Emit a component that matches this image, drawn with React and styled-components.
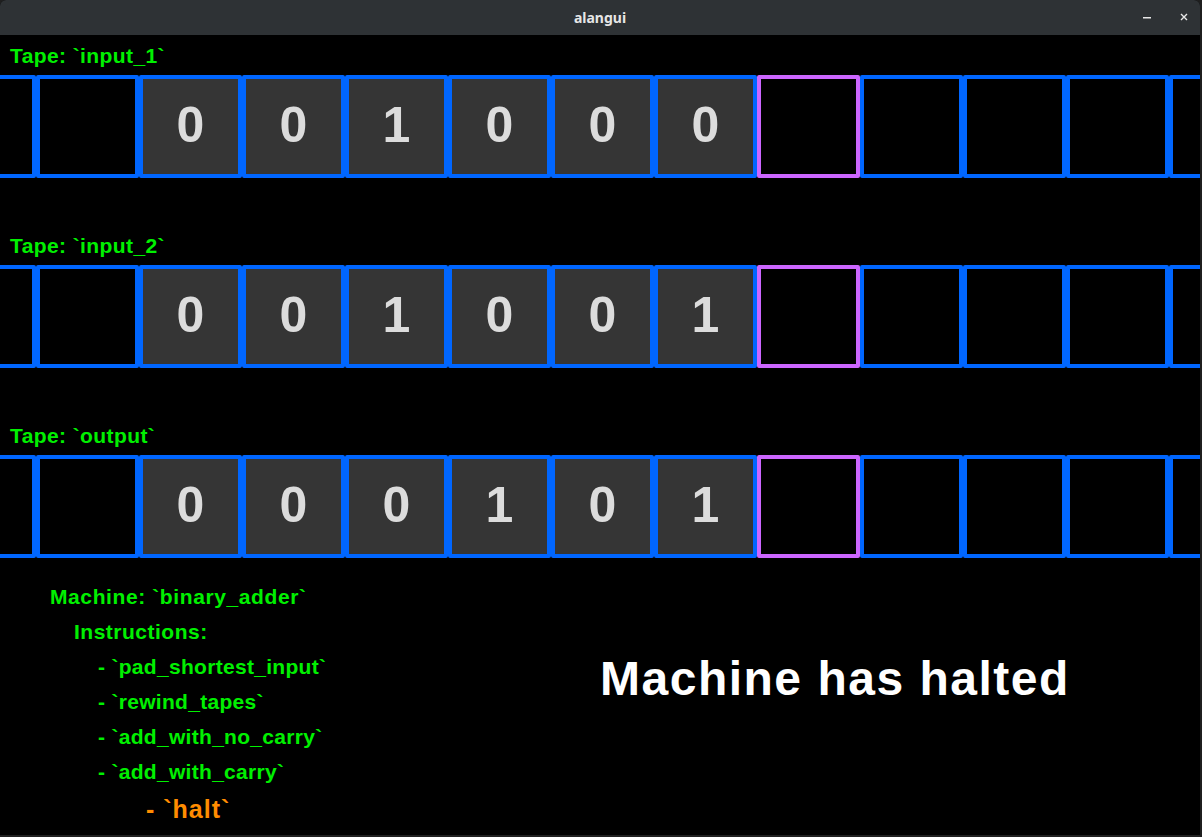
import styled, { createGlobalStyle } from "styled-components";

const GlobalStyle = createGlobalStyle`
  html, body {
    margin: 0;
    padding: 0;
    background: #1f1f1f;
  }
`;

const tapes = [
  { name: "input_1", cells: ["0", "0", "1", "0", "0", "0"] },
  { name: "input_2", cells: ["0", "0", "1", "0", "0", "1"] },
  { name: "output", cells: ["0", "0", "0", "1", "0", "1"] },
];

const instructions = [
  "pad_shortest_input",
  "rewind_tapes",
  "add_with_no_carry",
  "add_with_carry",
];

const HEAD = 8;
const TOTAL = 13;

function buildCells(values) {
  const out = [];
  for (let i = 0; i < TOTAL; i++) {
    const v = i >= 2 && i < 2 + values.length ? values[i - 2] : null;
    out.push({ value: v, head: i === HEAD });
  }
  return out;
}

export default function App() {
  return (
    <>
      <GlobalStyle />
      <Window>
        <TitleBar>
          <Title>alangui</Title>
          <Controls>
            <ControlButton aria-label="minimize">
              <svg width="10" height="10" viewBox="0 0 10 10">
                <rect x="1" y="5" width="8" height="1.5" fill="#e8e8e8" />
              </svg>
            </ControlButton>
            <ControlButton aria-label="close">
              <svg width="10" height="10" viewBox="0 0 10 10">
                <path d="M2 2 L8 8 M8 2 L2 8" stroke="#e8e8e8" strokeWidth="1.4" />
              </svg>
            </ControlButton>
          </Controls>
        </TitleBar>

        <Tapes>
          {tapes.map((tape) => (
            <TapeBlock key={tape.name}>
              <TapeLabel>Tape: `{tape.name}`</TapeLabel>
              <CellRow>
                {buildCells(tape.cells).map((c, i) => (
                  <Cell key={i} $filled={c.value !== null} $head={c.head}>
                    {c.value}
                  </Cell>
                ))}
              </CellRow>
            </TapeBlock>
          ))}
        </Tapes>

        <Bottom>
          <MachineInfo>
            <InfoLine $indent={50} $spacing={0.6}>Machine: `binary_adder`</InfoLine>
            <InfoLine $indent={74} $spacing={0.5}>Instructions:</InfoLine>
            {instructions.map((ins) => (
              <InfoLine key={ins} $indent={98} $spacing={0.3}>
                - `{ins}`
              </InfoLine>
            ))}
            <CurrentLine>- `halt`</CurrentLine>
          </MachineInfo>
          <Halted>Machine has halted</Halted>
        </Bottom>
      </Window>
    </>
  );
}

const Window = styled.div`
  width: 1200px;
  height: 835px;
  background: #000;
  overflow: hidden;
  border-radius: 6px 6px 0 0;
  font-family: "Liberation Sans", Arial, sans-serif;
`;

const TitleBar = styled.div`
  position: relative;
  height: 35px;
  background: #2e3235;
  display: flex;
  align-items: center;
  justify-content: center;
`;

const Title = styled.div`
  font-family: "Noto Sans", "DejaVu Sans", sans-serif;
  font-weight: 700;
  font-size: 14px;
  color: #e6e6e6;
  margin-top: -1px;
`;

const Controls = styled.div`
  position: absolute;
  right: 10px;
  top: 0;
  height: 35px;
  display: flex;
  align-items: center;
  gap: 25px;
`;

const ControlButton = styled.div`
  width: 12px;
  height: 12px;
  display: flex;
  align-items: center;
  justify-content: center;
  margin-top: -1px;
`;

const Tapes = styled.div`
  display: flex;
  flex-direction: column;
  gap: 54px;
  padding-top: 7px;
`;

const TapeBlock = styled.div`
  display: flex;
  flex-direction: column;
`;

const TapeLabel = styled.div`
  color: #00f000;
  font-weight: 700;
  font-size: 21px;
  line-height: 28px;
  letter-spacing: 0.4px;
  padding-left: 10px;
  margin-bottom: 5px;
`;

const CellRow = styled.div`
  display: flex;
  margin-left: -67px;
`;

const Cell = styled.div`
  flex: 0 0 103px;
  height: 103px;
  box-sizing: border-box;
  border: 4px solid ${(p) => (p.$head ? "#cc66ff" : "#0066ff")};
  border-radius: 2px;
  background: ${(p) => (p.$filled ? "#353535" : "transparent")};
  display: flex;
  align-items: center;
  justify-content: center;
  padding-bottom: 4px;
  color: #dcdcdc;
  font-weight: 700;
  font-size: 50px;
  position: ${(p) => (p.$head ? "relative" : "static")};
  z-index: ${(p) => (p.$head ? 1 : 0)};
`;

const Bottom = styled.div`
  display: grid;
  grid-template-columns: 600px 1fr;
  margin-top: 21px;
`;

const MachineInfo = styled.div`
  display: flex;
  flex-direction: column;
`;

const InfoLine = styled.div`
  color: #00f000;
  font-weight: 700;
  font-size: 21px;
  line-height: 35px;
  letter-spacing: ${(p) => p.$spacing}px;
  padding-left: ${(p) => p.$indent}px;
  white-space: nowrap;
`;

const CurrentLine = styled.div`
  color: #ff8c00;
  font-weight: 700;
  font-size: 25px;
  line-height: 40px;
  letter-spacing: 1px;
  padding-left: 146px;
`;

const Halted = styled.div`
  color: #ffffff;
  font-weight: 700;
  font-size: 48px;
  line-height: 55px;
  letter-spacing: 1.5px;
  margin-top: 72px;
  white-space: nowrap;
`;
